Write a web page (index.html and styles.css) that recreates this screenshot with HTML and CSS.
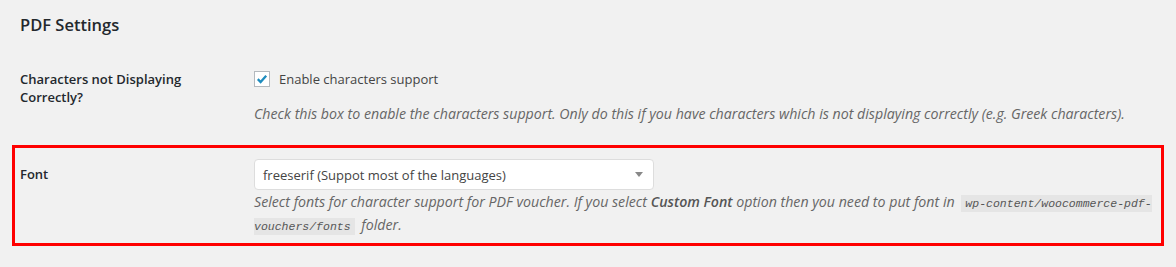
FILE: index.html
```html
<!DOCTYPE html>
<html lang="en">
<head>
    <meta charset="UTF-8">
    <title>PDF Settings</title>
    <link rel="stylesheet" href="styles.css">
</head>
<body>
    <div class="wrap">
        <h2 class="section-title">PDF Settings</h2>

        <!-- Characters support -->
        <div class="form-row first">
            <div class="form-label">Characters not Displaying Correctly?</div>
            <div class="form-field">
                <label class="check-label">
                    <span class="checkbox">
                        <svg width="16" height="16" viewBox="0 0 16 16"><path d="M3.2 8.2 L6.4 11.4 L12.8 4.2" fill="none" stroke="#1e8cbe" stroke-width="2.6"/></svg>
                    </span>
                    Enable characters support
                </label>
                <p class="description">Check this box to enable the characters support. Only do this if you have characters which is not displaying correctly (e.g. Greek characters).</p>
            </div>
        </div>

        <!-- Font -->
        <div class="form-row highlight">
            <div class="form-label">Font</div>
            <div class="form-field">
                <div class="select">
                    <span>freeserif (Suppot most of the languages)</span>
                    <span class="arrow"></span>
                </div>
                <p class="description tight">Select fonts for character support for PDF voucher. If you select <b>Custom Font</b> option then you need to put font in <code>wp-content/woocommerce-pdf-vouchers/fonts</code> folder.</p>
            </div>
        </div>
    </div>
</body>
</html>
```

FILE: styles.css
```css
body {
    margin: 0;
    background: #f1f1f1;
    color: #444;
    font-family: "Open Sans", sans-serif;
    font-size: 13px;
}
.wrap {
    padding: 0 12px 0 20px;
}
.section-title {
    margin: 0;
    padding-top: 13px;
    font-size: 16.5px;
    font-weight: 600;
    color: #23282d;
    line-height: 24px;
}
.form-row {
    display: grid;
    grid-template-columns: 234px 1fr;
}
.form-row.first {
    margin-top: 25px;
}
.form-label {
    color: #23282d;
    font-weight: 600;
    font-size: 13px;
    line-height: 18px;
    padding-right: 40px;
}
.form-row.first .form-label {
    padding-top: 8px;
}
.check-label {
    display: flex;
    align-items: center;
    gap: 9px;
    font-size: 13px;
    color: #444;
    height: 18px;
    margin-top: 8px;
}
.checkbox {
    width: 14px;
    height: 14px;
    border: 1px solid #b4b9be;
    background: #fff;
    display: flex;
    align-items: center;
    justify-content: center;
}
.checkbox svg {
    width: 14px;
    height: 14px;
}
.description {
    margin: 15px 0 0;
    font-style: italic;
    color: #666;
    font-size: 14.2px;
    line-height: 21px;
}
.description b {
    font-weight: 600;
    color: #555;
}
.description.tight {
    margin-top: 1px;
}
.highlight {
    margin: 21px 0 0 -8px;
    border: 3px solid #ff0000;
    padding: 11px 0 6px 5px;
}
.highlight .form-label {
    padding-top: 6px;
}
.select {
    box-sizing: border-box;
    width: 400px;
    height: 31px;
    background: #fff;
    border: 1px solid #ddd;
    border-radius: 4px;
    display: flex;
    align-items: center;
    justify-content: space-between;
    padding: 0 10px 0 8px;
    font-size: 13px;
    color: #444;
}
.arrow {
    width: 0;
    height: 0;
    border-left: 4px solid transparent;
    border-right: 4px solid transparent;
    border-top: 5px solid #888;
}
code {
    font-family: "Liberation Mono", monospace;
    font-size: 11.5px;
    font-style: italic;
    background: #e5e5e5;
    padding: 2px 4px;
    margin: 0 3px;
    color: #555;
}
```
